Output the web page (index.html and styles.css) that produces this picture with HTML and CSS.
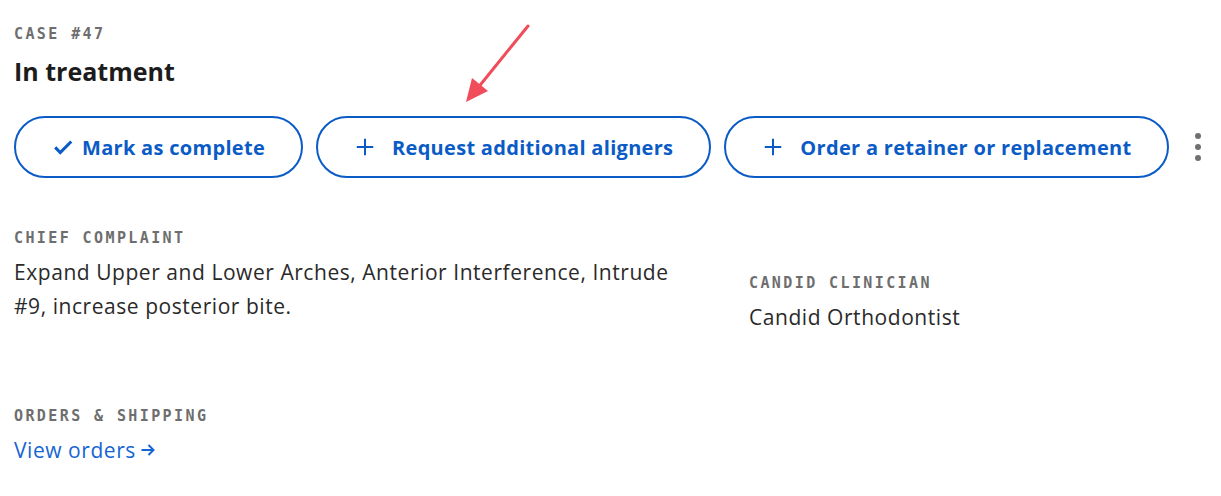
FILE: index.html
```html
<!DOCTYPE html>
<html lang="en">
<head>
  <meta charset="UTF-8">
  <meta name="viewport" content="width=device-width, initial-scale=1.0">
  <title>Case #47</title>
  <link rel="stylesheet" href="styles.css">
</head>
<body>
  <div class="case">
    <div class="case-header">
      <div class="label">CASE #47</div>
      <h1>In treatment</h1>
    </div>

    <div class="actions">
      <button class="pill">
        <svg class="icon check" viewBox="0 0 24 24"><path d="M3.5 12.5l5.5 5.5L21 6"/></svg>
        Mark as complete
      </button>
      <button class="pill">
        <svg class="icon plus" viewBox="0 0 24 24"><path d="M12 3v18M3 12h18"/></svg>
        Request additional aligners
      </button>
      <button class="pill">
        <svg class="icon plus" viewBox="0 0 24 24"><path d="M12 3v18M3 12h18"/></svg>
        Order a retainer or replacement
      </button>
      <button class="more" aria-label="More actions">
        <span></span><span></span><span></span>
      </button>
    </div>

    <div class="details">
      <div class="field complaint">
        <div class="label">CHIEF COMPLAINT</div>
        <p>Expand Upper and Lower Arches, Anterior Interference, Intrude #9, increase posterior bite.</p>
      </div>
      <div class="field clinician">
        <div class="label">CANDID CLINICIAN</div>
        <p>Candid Orthodontist</p>
      </div>
    </div>

    <div class="field orders">
      <div class="label">ORDERS &amp; SHIPPING</div>
      <a href="#" class="link">View orders
        <svg class="arrow" viewBox="0 0 16 16"><path d="M1.5 8h12M8.5 3L13.5 8l-5 5"/></svg>
      </a>
    </div>
  </div>

  <!-- callout arrow pointing at the aligner button -->
  <svg class="callout" width="80" height="90" viewBox="0 0 80 90">
    <path class="callout-line" d="M76 4L25 67"/>
    <path class="callout-head" d="M14 80L20 56L36 69Z"/>
  </svg>
</body>
</html>
```

FILE: styles.css
```css
* {
  box-sizing: border-box;
  margin: 0;
  padding: 0;
}

body {
  background: #fff;
  color: #222;
  font-family: 'Open Sans', sans-serif;
}

.case {
  padding: 24px 14px 0;
}

.label {
  font-family: 'DejaVu Sans Mono', monospace;
  font-weight: bold;
  font-size: 15px;
  letter-spacing: 2.4px;
  color: #6e6e6e;
  line-height: 20px;
}

h1 {
  margin-top: 11px;
  font-size: 25px;
  font-weight: 700;
  color: #1c1c1c;
  line-height: 32px;
}

.actions {
  display: flex;
  align-items: center;
  gap: 13px;
  margin-top: 29px;
}

.pill {
  display: flex;
  align-items: center;
  gap: 8px;
  height: 62px;
  padding: 0 36px;
  border: 2.5px solid #0b5bc6;
  border-radius: 31px;
  background: #fff;
  color: #0b5bc6;
  font-family: 'Open Sans', sans-serif;
  font-size: 20px;
  font-weight: 700;
  letter-spacing: 0.3px;
  cursor: pointer;
}

.icon {
  width: 22px;
  height: 22px;
  fill: none;
  stroke: currentColor;
  stroke-width: 2.2;
}

.icon.check {
  stroke-width: 3.4;
}

.icon.plus {
  margin-right: 8px;
}

.more {
  display: flex;
  flex-direction: column;
  gap: 5px;
  margin-left: 13px;
  border: none;
  background: none;
}

.more span {
  width: 6px;
  height: 6px;
  border-radius: 50%;
  background: #707070;
}

.details {
  display: flex;
  margin-top: 50px;
}

.complaint {
  width: 735px;
}

.clinician {
  margin-top: 45px;
}

.field p {
  margin-top: 7px;
  font-size: 21px;
  letter-spacing: 0.55px;
  line-height: 34px;
  color: #2a2a2a;
  max-width: 660px;
}

.orders {
  margin-top: 72px;
}

.link {
  display: inline-flex;
  align-items: center;
  gap: 4px;
  margin-top: 7px;
  font-size: 21px;
  letter-spacing: 0.55px;
  line-height: 34px;
  color: #1565d2;
  text-decoration: none;
}

.arrow {
  width: 16px;
  height: 16px;
  fill: none;
  stroke: currentColor;
  stroke-width: 2;
}

.callout {
  position: absolute;
  left: 452px;
  top: 22px;
}

.callout-line {
  stroke: #f04c5a;
  stroke-width: 3;
  stroke-linecap: round;
}

.callout-head {
  fill: #f04c5a;
}
```
